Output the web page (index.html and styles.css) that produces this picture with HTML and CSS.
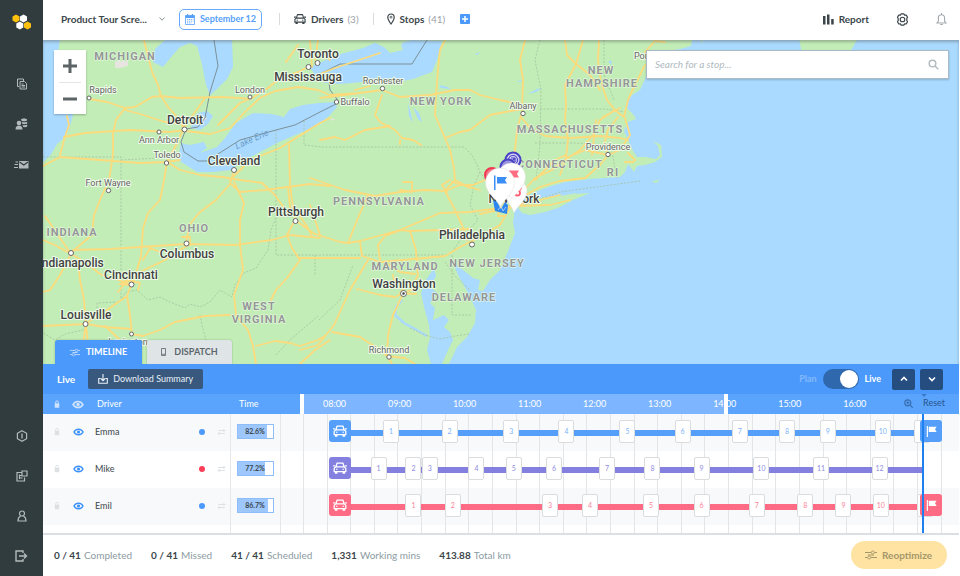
FILE: index.html
```html
<!DOCTYPE html>
<html lang="en">
<head>
<meta charset="utf-8">
<title>Route planner</title>
<link rel="stylesheet" href="styles.css">
</head>
<body>
<svg class="sprite" aria-hidden="true">
  <symbol id="i-car" viewBox="0 0 16 14"><path fill="none" stroke="currentColor" stroke-width="1.500" stroke-linejoin="round" d="M3.200 5.800 4.600 1.200h6.800l1.400 4.600M2.800 5.800h10.400l1.600 1.700v3.700H1.200V7.500z"/><path fill="currentColor" d="M2 11h3v2.800H2zM11 11h3v2.800h-3zM0 3.800h2.500v1.400H0zM13.500 3.800H16v1.400h-2.500z"/><circle cx="4.300" cy="8.500" r=".9" fill="currentColor"/><circle cx="11.700" cy="8.500" r=".9" fill="currentColor"/></symbol>
  <symbol id="i-flag" viewBox="0 0 14 14"><path fill="currentColor" d="M1 0h1.500v14H1zM3.500 1h10l-2 3.200 2 3.300h-10z"/></symbol>
  <symbol id="i-eye" viewBox="0 0 14 10"><path fill="none" stroke="currentColor" stroke-width="1.800" d="M1.200 5C4 .2 10 .2 12.800 5 10 9.800 4 9.800 1.200 5z"/><circle cx="7" cy="5" r="2" fill="currentColor"/></symbol>
  <symbol id="i-lock" viewBox="0 0 8 10"><path fill="currentColor" d="M1 4h6v6H1z"/><path fill="none" stroke="currentColor" stroke-width="1.200" d="M2.200 4.500V2.600a1.800 1.800 0 0 1 3.600 0v1.900"/></symbol>
  <symbol id="i-swap" viewBox="0 0 12 10"><path fill="none" stroke="currentColor" stroke-width="1.300" d="M1.500 3h9M8.500 1l2 2-2 2M10.500 7h-9M3.500 5l-2 2 2 2"/></symbol>
  <symbol id="i-tune" viewBox="0 0 12 10"><path fill="none" stroke="currentColor" d="M0 2.500h6M9.500 2.500H12M0 7.500h2.500M6 7.500h6M3 5h6"/><circle cx="7.800" cy="2.500" r="1.500" fill="none" stroke="currentColor" stroke-width=".9"/><circle cx="4.200" cy="7.500" r="1.500" fill="none" stroke="currentColor" stroke-width=".9"/></symbol>
</svg>
<div class="app">
  <aside class="sidebar">
    <a class="logo" href="#" aria-label="Home">
      <svg width="22" height="18" viewBox="0 0 22 18"><path fill="#fec10d" d="M5 1.500 8.500 3.500v4L5 9.500 1.500 7.500v-4z"/><path fill="#fff" d="M12.500 1.500 16 3.500v4l-3.500 2L9 7.500v-4z"/><path fill="#fff" d="M8.800 8.500l3.500 2v4l-3.500 2-3.500-2v-4z"/><path fill="#fec10d" d="M16.500 8.500l3.500 2v4l-3.500 2-3.500-2v-4z"/></svg>
    </a>
    <nav class="side-nav">
      <a href="#" aria-label="Plans"><svg width="12" height="12" viewBox="0 0 12 12"><path fill="none" stroke="currentColor" d="M3 8.500H1.500V1h6v2M4 3.500h4.500l2 2V11H4z"/><path fill="none" stroke="currentColor" d="M5.500 6h2M5.500 7.500h3.500M5.500 9h3.500"/></svg></a>
      <a href="#" aria-label="Drivers"><svg width="13" height="12" viewBox="0 0 13 12"><circle cx="4" cy="5" r="2.300" fill="currentColor"/><path fill="currentColor" d="M.5 11.500c0-3 1.500-4 3.500-4s3.500 1 3.500 4zM6 1.500C7 .3 11 .3 12 1.500v1c-1 1-4 1-5.500.2zM7 4c1.500.600 4 .400 5.200-.300v1.800c-1 .700-3.500.900-5 .300zM7.500 7c1.500.400 3.500.200 4.700-.400v2c-1 .600-2.500.700-4 .400z"/></svg></a>
      <a href="#" aria-label="Messages"><svg width="15" height="9" viewBox="0 0 15 9"><path fill="currentColor" d="M5 1h9.500v7.500H5z"/><path fill="none" stroke="#303c3e" stroke-width="1.200" d="M5.500 2l4.300 3 4.200-3"/><path stroke="currentColor" d="M1.500 2h2.500M.5 4.500H4M0 7.500h4"/></svg></a>
    </nav>
    <nav class="side-nav side-nav-end">
      <a href="#" aria-label="Info"><svg width="12" height="12" viewBox="0 0 12 12"><path fill="none" stroke="currentColor" stroke-width="1.200" d="M6 .7l4.600 2.600v5.400L6 11.300 1.400 8.700V3.300z"/><path stroke="currentColor" stroke-width="1.300" d="M6 3.500v5"/></svg></a>
      <a href="#" aria-label="Integrations"><svg width="12" height="12" viewBox="0 0 12 12"><path fill="none" stroke="currentColor" stroke-width="1.200" d="M5.500 2.500H1v8.500h7.500V7.500M6 1h5v5H6zM3.500 4.500v4.500M3.500 5.500h2M3.500 8h3"/></svg></a>
      <a href="#" aria-label="Account"><svg width="10" height="12" viewBox="0 0 10 12"><circle cx="5" cy="3.500" r="2.500" fill="none" stroke="currentColor" stroke-width="1.200"/><path fill="none" stroke="currentColor" stroke-width="1.200" d="M3.500 6C1.500 7 1 9 1 11h8c0-2-.500-4-2.500-5"/></svg></a>
      <a href="#" aria-label="Log out"><svg width="13" height="12" viewBox="0 0 13 12"><path fill="none" stroke="currentColor" stroke-width="1.400" d="M8 3V1H1v10h7V9M4 6h7.500M9 3.500 11.500 6 9 8.500"/></svg></a>
    </nav>
  </aside>

  <main class="main">
    <header class="topbar">
      <button class="plan-name" type="button">Product Tour Scre...<svg width="6" height="4" viewBox="0 0 6 4"><path fill="none" stroke="#8a9296" d="M.5.500 3 3.200 5.500.500"/></svg></button>
      <button class="date" type="button"><svg width="10" height="11" viewBox="0 0 10 11"><path fill="none" stroke="currentColor" stroke-width=".8" d="M.5 1.500h9v9h-9z"/><path fill="currentColor" d="M.5 1.500h9v2.500h-9zM2 0h1.200v2H2zM6.800 0H8v2H6.800z"/><path stroke="currentColor" stroke-width=".8" stroke-dasharray="1.300 .7" d="M2 5.500h6.500M2 7.200h6.500M2 8.900h4.500"/></svg>September 12</button>
      <div class="counter counter-drivers"><svg width="12" height="12"><use href="#i-car"/></svg><b>Drivers</b><span>(3)</span></div>
      <div class="counter counter-stops"><svg width="8" height="12" viewBox="0 0 8 12"><path fill="none" stroke="currentColor" stroke-width="1.200" d="M4 11C2 8.200.8 6.200.8 4.200a3.200 3.200 0 0 1 6.400 0C7.200 6.200 6 8.200 4 11z"/><circle cx="4" cy="4.200" r="1" fill="none" stroke="currentColor" stroke-width=".8"/></svg><b>Stops</b><span>(41)</span></div>
      <button class="add" type="button" aria-label="Add stops"><svg width="10" height="10" viewBox="0 0 10 10"><rect width="10" height="10" rx="1" fill="#4a99fb"/><path stroke="#fff" stroke-width="1.500" d="M5 2v6M2 5h6"/></svg></button>
      <button class="report" type="button"><svg width="11" height="11" viewBox="0 0 11 11"><path fill="currentColor" d="M0 2h2.500v8.500H0zM4 .5h2.500v10H4zM8.200 5h2.500v5.500H8.200z"/></svg>Report</button>
      <button class="icon-btn" type="button" aria-label="Settings"><svg width="13" height="13" viewBox="0 0 13 13"><path fill="none" stroke="#394348" stroke-width="1.200" stroke-linejoin="round" d="M5.200.8h2.600l.8 1.300 1.600-.1 1.300 2.200-.7 1.400v1.800l.7 1.400-1.300 2.200-1.600-.1-.8 1.300H5.200l-.8-1.300-1.600.1-1.300-2.200.7-1.400V5.600l-.7-1.400L2.800 2l1.600.1z"/><circle cx="6.500" cy="6.500" r="2.300" fill="none" stroke="#394348" stroke-width="1.100"/></svg></button>
      <button class="icon-btn" type="button" aria-label="Notifications"><svg width="11" height="13" viewBox="0 0 11 13"><path fill="none" stroke="#a3a9ac" stroke-width="1.100" d="M1 10h9L8.600 8V5c0-2-1.200-3.200-3.100-3.200S2.400 3 2.400 5v3zM5.500 0v2M4.200 11.500h2.600"/></svg></button>
    </header>

    <section class="map" aria-label="Map">
      <svg class="map-canvas" viewBox="43 40 916 324" preserveAspectRatio="xMidYMid slice">
        <rect x="0" y="0" width="1100" height="500" fill="#c2edb6"/>
        <g class="water">
          <path d="M43 40H60L58 52 62 80 73 115 69 130 66 136 57 144 50 156 43 162z"/>
          <path d="M165 40 155 49 153 62 163 67 172 56 180 47 190 43 197 46 202 64 206 85 210 95 217 89 227 79 233 67 232 40z"/>
          <path d="M198 113 207 111 213 116 208 124 200 130 191 128 193 120z"/>
          <path d="M181 143 190 145 204 142 207 148 200 153 217 147 225 138 236 123 253 113 272 114 284 117 290 109 303 105 319 103 335 102 337 107 329 116 318 125 300 133 277 143 260 152 245 160 231 170 213 172 197 172 186 165 178 160z"/>
          <path d="M310 67 337 55 363 48 375 43 384 47 390 53 403 50 400 43 412 40 442 41 437 60 432 72 413 79 387 84 363 82 340 84 325 83 317 78z"/>
          <path d="M693 36 691 46 680 49 660 52 650 62 645 79 640 90 632 95 628 100 627 108 633 114 636 119 628 122 624 131 628 140 632 149 637 157 645 157 656 159 660 155 658 146 653 141 661 145 662 157 655 162 645 165 637 166 634 172 628 164 625 172 620 177 605 178 590 179 565 182 548 187 535 192 522 199 514 207 514 216 513 222 515 233 508 251 500 270 490 280 483 291 478 290 480 280 473 278 463 270 453 263 458 275 467 291 476 310 475 323 467 337 457 347 449 364V380H970V30z"/>
          <path d="M434 268 426 280 421 293 424 307 429 325 430 338 427 350 431 364H442L448 350 453 340 450 332 444 327 449 320 444 315 433 320 435 308 430 303 437 293 430 287 436 276z"/>
          <path d="M528 94l9-5 5-1-6 4zM517 82l6-3-3 3zM439 85l9 2 2 2-9-1zM475 54l6-2-4 3zM408 103l1 13 4 7-3-13zM413 107l5 12 4 3-3-9zM608 62l3-2 1 5z"/>
          <path fill="none" stroke="#aadaff" stroke-width="2.500" d="M402 300 396 307 395 315 404 323 415 329 427 336"/>
        </g>
        <g fill="#c2edb6">
          <path d="M518 208 522 213 530 215 545 212 558 208 573 200 590 193 575 194 568 198 577 193 560 196 545 197 530 200z"/>
          <path d="M799 36 801 50 850 52 858 38z"/>
          <path d="M652 181l8-1-4 3zM640 176l4 1zM700 41l3 0v2z"/>
          <path d="M396 44l8-2-4 4z"/>
        </g>
        <path fill="#e6e5e0" d="M115 61h13v5l-8 2h-5zM203 116l4 2-3 3-3-2zM331 118l4 1-4 2z"/>
        <g class="borders">
          <path d="M43 157H121V300M121 160 160 158M276 130V255H449M304 121V145L322 147H464L472 155 477 165 480 172 488 184M315 255V275M452 255V315H472M540 40 535 60 541 90 540 145 536 180M540 109H605L625 112M535 143H575L608 145M604 40V75L614 100"/>
          <path d="M277 215 271 230 268 250 256 268 244 273 235 285 232 297 220 290 210 302 200 307 190 304 185 308 170 302 160 297 148 300 137 290 126 292 119 302 97 303 97 312 83 330 65 334 55 340 43 333M200 315 202 325 206 340 192 347 172 360M480 172 474 185 470 205 478 220 463 236 452 252M319 320 340 300 353 265M445 262 456 277 470 290M410 328 425 335 440 339 455 336 470 334M612 152 617 178M503 180 510 195M640 181 560 192 520 206M276 355 290 340 318 316"/>
        </g>
        <g class="frontier"><path d="M214 40 218 66 210 92 205 118 198 127 186 129 181 142 184 152 198 161 207 161 240 140 276 130 295 125 320 112 336 104 337 99 330 90 329 83M320 74 340 64 412 64 427 40"/></g>
        <g class="roads">
          <path d="M144 40 152 72 158 85 161 96 168 107 178 118 184 129M161 96 152 97 135 107 125 108 107 102 90 99M125 108 116 120 113 133 113 155 109 180 100 200 94 215 92 235M161 96 180 98 220 97 240 98 250 99M125 110 140 114 165 122 182 124 186 125M43 166 60 157 100 160 140 163 166 162 180 160M60 155 64 140 69 125 67 116M64 137 85 133 130 130 170 132 185 130"/>
          <path d="M186 131 210 134 230 128 247 110 260 98 275 91 298 87 318 90 330 95M218 125 240 103 252 98M252 98 268 88 280 78 298 72 310 66M184 128 176 145 167 162M167 162 164 180 160 200 148 213 143 228 141 256 137 270 132 283M184 127 195 112 205 98"/>
          <path d="M167 162 180 170 200 175 222 177 240 180 262 183 275 195 282 205 288 214M233 173 230 184 216 200 200 212 190 224 186 242M234 182 244 203 240 220 240 245 243 270 234 295 236 315 248 330 253 346 256 364M230 180 250 160 280 148 320 123 330 118M289 145 290 185 294 215M230 183 240 192 265 190 310 184 330 186"/>
          <path d="M43 240 55 245 71 254 73 250 110 249 186 244 235 245 272 240 290 235 320 238M71 254 60 275 50 290 43 292M71 254 85 262 100 274 128 283M78 260 80 280 84 300 86 324M71 254 45 216M188 245 165 260 140 272 131 285M131 285 120 284M131 285 127 296 107 310 88 322M127 296 130 315 132 334 143 336 160 330 175 322 205 316 230 315M86 324 105 327 131 329M43 326 86 324 88 345M86 324 82 350 84 364M256 346 275 341 290 343 300 346 318 340 325 336M300 364 315 350 330 340M92 235 80 245 72 252M105 326 120 340 135 347"/>
          <path d="M294 222 287 235 292 248 300 260 287 278 276 290 271 300M298 258 360 258M296 221 290 207 288 188M295 220 315 234 340 242 348 243 360 241 400 230 440 213 470 212 500 208 516 207M299 215 306 225 312 236M320 235 310 205M348 243 358 218 368 195M360 242 362 256 380 262 402 260 425 258 445 256 460 247 480 237 500 225 510 208M400 230 410 231 470 229M410 231 416 250 417 268 418 275 411 290 404 293M380 260 378 245 385 236 402 230M368 260 350 290 334 325 318 345 300 350M357 289 380 295 395 297 403 293M393 275 395 285M403 294 393 315 388 335 387 355 392 364M332 332 360 337 380 350 387 356 405 358 415 364M385 262 400 272 415 274"/>
          <path d="M310 178 345 190 375 196 400 192 425 190 445 191 460 185 473 185 485 180M400 190 412 192 412 182 403 182M445 191 455 210 462 225 467 240M454 168 455 180 450 185 445 191M454 168 450 150 445 138 435 115 436 95 438 70 440 50 445 40M320 140 335 137 345 140 365 130 390 126M382 95 375 115 380 122 395 130 402 138 413 140 421 145M400 140 400 144M330 95 360 93 382 90 400 97 430 95 455 90 470 90 480 95 500 100 519 104M445 138 460 132 470 130 490 115 505 112 522 109M522 110 523 80 520 60 525 40M522 112 517 130 515 150 512 165M522 118 530 128 545 136 570 138 600 136 620 138 628 140M320 98 360 93M450 180 442 185 447 192M454 168 455 180 470 188"/>
          <path d="M565 40 567 55 576 64 565 85 566 105 565 120 568 140 566 158 560 175M583 40 576 64M599 40 598 60 601 82 607 100 615 110 624 117M624 117 628 100 635 85 645 65M615 110 600 120 593 135 580 150 565 160 552 170 535 178 524 190M576 64 590 75 600 90M566 158 585 150 608 155 620 150 630 135 625 118M608 155 600 165 585 178 560 181 540 187 524 196M596 120 592 155M618 117 608 130 604 145 608 155M628 153 635 160 633 162 625 162M506 207 540 200 560 195M480 214 498 210 510 190 520 180M516 206 550 205 570 200M506 207 495 185M452 182 480 190M535 180 555 160 566 155M603 117 620 108M320 74 335 68 380 53M310 40 312 67M318 40 315 60M286 62 298 45M645 52 655 41 665 42M320 52 330 60M355 90 370 86"/>
          <path d="M500 208 498 216 504 216M120 284 127 280 140 283 138 290M160 252 150 248 143 260M118 292 128 280M182 237 190 237 190 245M400 288 408 286M410 280 400 293 416 294"/>
        </g>
        <g class="towns">
          <circle cx="89" cy="98" r="2"/><circle cx="250" cy="97" r="2"/><circle cx="159" cy="132" r="2"/><circle cx="184.500" cy="129.500" r="2.500"/><circle cx="166.500" cy="163" r="2.200"/><circle cx="234" cy="170" r="2.500"/><circle cx="108.500" cy="190.500" r="2.200"/><circle cx="308.500" cy="67" r="2.500"/><circle cx="317.500" cy="63" r="2.500"/><circle cx="382.500" cy="88.500" r="2.200"/><circle cx="336.500" cy="102" r="2.200"/><circle cx="523" cy="113.500" r="2.200"/><circle cx="608" cy="154.500" r="2.200"/><circle cx="71" cy="253" r="2.500"/><circle cx="186.500" cy="243.500" r="2.500"/><circle cx="131.500" cy="284.500" r="2.500"/><circle cx="85.500" cy="324" r="2.500"/><circle cx="131.500" cy="334" r="2"/><circle cx="144.500" cy="343" r="2.200"/><circle cx="295.500" cy="221" r="2.500"/><circle cx="472" cy="244.500" r="2.500"/><circle cx="389" cy="357" r="2.200"/><circle cx="403.500" cy="293.500" r="3"/><circle cx="403.500" cy="293.500" r="1" class="capital"/>
        </g>
        <g class="states">
          <text x="125" y="60">MICHIGAN</text><text x="441" y="105">NEW YORK</text><text x="601" y="74">NEW</text><text x="602" y="87">HAMPSHIRE</text><text x="570" y="133">MASSACHUSETTS</text><text x="560" y="168">CONNECTICUT</text><text x="613" y="176">RI</text><text x="379" y="205">PENNSYLVANIA</text><text x="194" y="232">OHIO</text><text x="72" y="236">INDIANA</text><text x="405" y="270">MARYLAND</text><text x="487" y="267">NEW JERSEY</text><text x="464" y="301">DELAWARE</text><text x="259" y="310">WEST</text><text x="259" y="323">VIRGINIA</text>
        </g>
        <g class="cities">
          <text x="318" y="58">Toronto</text><text x="308" y="81">Mississauga</text><text x="185" y="124">Detroit</text><text x="234" y="165">Cleveland</text><text x="296" y="216">Pittsburgh</text><text x="187" y="258">Columbus</text><text x="71" y="267">Indianapolis</text><text x="131" y="279">Cincinnati</text><text x="86" y="319">Louisville</text><text x="472" y="239">Philadelphia</text><text x="404" y="288">Washington</text><text x="514" y="203">New York</text>
        </g>
        <g class="small-towns">
          <text x="103" y="93">Rapids</text><text x="250" y="93">London</text><text x="159" y="143">Ann Arbor</text><text x="167" y="158">Toledo</text><text x="108" y="186">Fort Wayne</text><text x="383" y="84">Rochester</text><text x="355" y="105">Buffalo</text><text x="523" y="109">Albany</text><text x="608" y="150">Providence</text><text x="389" y="353">Richmond</text><text x="651" y="59">Portland</text><text x="128" y="345">Lexington</text>
          <text class="lake" x="253" y="142" transform="rotate(-24 253 142)">Lake Erie</text>
        </g>
        <g class="pins">
          <circle cx="513" cy="160" r="7.500" fill="#d5d2f6" stroke="#4a42c4" stroke-width="2"/><circle cx="513" cy="160" r="4.500" fill="none" stroke="#4a42c4" stroke-width="1.200"/><path stroke="#4a42c4" stroke-width="1.200" fill="none" d="M510 163l5-5M511 158h4v4"/>
          <circle cx="508" cy="167" r="7.500" fill="#9a94e0" stroke="#4a42c4" stroke-width="2"/>
          <circle cx="492" cy="175" r="7" fill="#f4798c" stroke="#ef3850" stroke-width="2"/>
          <path fill="#fff" d="M514 213C511 204 505 200 505 191a11 11 0 0 1 22 0c0 9-9 14-13 22z" stroke="#ddd" stroke-width=".5"/><path fill="none" stroke="#ff5c73" stroke-width="1.800" d="M517.500 190.500a2.500 2.500 0 1 0 2.500 2.500c0-1.500-1-2.500-2.500-2.500zM519.500 190.500l2-3"/>
          <path fill="#fff" stroke="#ddd" stroke-width=".5" d="M512 199C507 192 497.500 188 497.500 177a14 14 0 0 1 28 0c0 10-9 15-13.500 22z"/><path fill="#ff6b80" d="M509 170.500h10l-2 3.500 2 3.500h-10z"/>
          <path fill="#2f86ee" d="M493 200l4 2 4 7 4-7 3 3-1 9-12-3z"/><path fill="none" stroke="#d6e8ff" stroke-width=".7" d="M498 210l3-4 2 5 3-4"/>
          <path fill="#fff" stroke="#ddd" stroke-width=".5" d="M500.500 207C498 199 485.500 194 485.500 182.500a14.500 14.500 0 0 1 29 0c0 11.500-11 16.500-14 24.500z"/><path fill="#3b8ef5" d="M494 175.500h1.500V190H494zM497 177h10l-2 3.300 2 3.200h-10z"/>
        </g>
      </svg>
      <div class="zoom">
        <button type="button" aria-label="Zoom in"><svg width="14" height="14" viewBox="0 0 14 14"><path stroke="#5d6466" stroke-width="3" d="M7 0v14M0 7h14"/></svg></button>
        <button type="button" aria-label="Zoom out"><svg width="14" height="14" viewBox="0 0 14 14"><path stroke="#5d6466" stroke-width="3" d="M0 7h14"/></svg></button>
      </div>
      <label class="search">
        <input type="text" placeholder="Search for a stop..." aria-label="Search for a stop">
        <svg width="11" height="11" viewBox="0 0 11 11"><circle cx="4.500" cy="4.500" r="3.300" fill="none" stroke="currentColor" stroke-width="1.500"/><path stroke="currentColor" stroke-width="1.600" d="M7 7l3.200 3.200"/></svg>
      </label>
      <div class="tabs">
        <button class="tab tab-active" type="button"><svg width="10" height="9"><use href="#i-tune"/></svg>TIMELINE</button>
        <button class="tab" type="button"><svg width="5" height="8" viewBox="0 0 5 8"><path fill="none" stroke="currentColor" stroke-width=".8" d="M.5.500h4v7h-4zM1 6.300h3"/></svg>DISPATCH</button>
      </div>
    </section>

    <section class="panel">
      <div class="panel-bar">
        <b>Live</b>
        <button class="download" type="button"><svg width="10" height="10" viewBox="0 0 10 10"><path fill="none" stroke="currentColor" stroke-width="1.100" d="M2.500 4.500H.7v4.800h8.600V4.500H7.500M5 0v6.500M2.800 4.500 5 6.700l2.200-2.200"/></svg>Download Summary</button>
        <label class="mode"><span class="mode-off">Plan</span><input type="checkbox" role="switch" checked><span>Live</span></label>
        <button class="step" type="button" aria-label="Previous"><svg width="8" height="6" viewBox="0 0 8 6"><path fill="none" stroke="#fff" stroke-width="1.600" d="M1 4.500 4 1.500l3 3"/></svg></button>
        <button class="step" type="button" aria-label="Next"><svg width="8" height="6" viewBox="0 0 8 6"><path fill="none" stroke="#fff" stroke-width="1.600" d="M1 1.500l3 3 3-3"/></svg></button>
      </div>
      <table class="schedule">
        <colgroup><col class="c-lock"><col class="c-eye"><col class="c-name"><col class="c-dot"><col class="c-swap"><col class="c-time"><col></colgroup>
        <thead>
          <tr>
            <th><svg width="6" height="8"><use href="#i-lock"/></svg></th>
            <th><svg width="12" height="9"><use href="#i-eye"/></svg></th>
            <th class="name">Driver</th><th></th><th></th><th class="time">Time</th>
            <th class="track-cell"><div class="hours"><span>08:00</span><span>09:00</span><span>10:00</span><span>11:00</span><span>12:00</span><span>13:00</span><span>14:00</span><span>15:00</span><span>16:00</span><i class="handle"></i><i class="handle handle-end"></i><i class="now-mark"></i><button class="reset" type="button"><svg width="9" height="9" viewBox="0 0 9 9"><circle cx="3.800" cy="3.800" r="3" fill="none" stroke="currentColor" stroke-width="1.200"/><path stroke="currentColor" stroke-width="1.100" d="M6 6l2.700 2.700M2.300 3.800h3M3.800 2.300v3"/></svg>Reset</button></div></th>
          </tr>
        </thead>
        <tbody>
          <tr class="blue">
            <td><svg class="faint" width="6" height="9"><use href="#i-lock"/></svg></td>
            <td><svg class="eye" width="11" height="8"><use href="#i-eye"/></svg></td>
            <td class="name">Emma</td><td><i class="dot"></i></td><td><svg class="faint" width="9" height="8"><use href="#i-swap"/></svg></td>
            <td class="time"><span class="load" style="--load:82.6%">82.6%</span></td>
            <td class="track-cell"><div class="track"><i class="route"></i><i class="end start"><svg width="14" height="12"><use href="#i-car"/></svg></i><span style="left:13.5%">1</span><span style="left:22.4%">2</span><span style="left:31.8%">3</span><span style="left:40.2%">4</span><span style="left:49.5%">5</span><span style="left:57.9%">6</span><span style="left:66.6%">7</span><span style="left:73.8%">8</span><span style="left:80%">9</span><span style="left:88.4%">10</span><span style="left:94.4%"></span><i class="end finish"><svg width="11" height="11"><use href="#i-flag"/></svg></i><i class="now"></i></div></td>
          </tr>
          <tr class="violet">
            <td><svg class="faint" width="6" height="9"><use href="#i-lock"/></svg></td>
            <td><svg class="eye" width="11" height="8"><use href="#i-eye"/></svg></td>
            <td class="name">Mike</td><td><i class="dot dot-red"></i></td><td><svg class="faint" width="9" height="8"><use href="#i-swap"/></svg></td>
            <td class="time"><span class="load" style="--load:77.2%">77.2%</span></td>
            <td class="track-cell"><div class="track"><i class="route"></i><i class="end start"><svg width="14" height="12"><use href="#i-car"/></svg></i><span style="left:11.6%">1</span><span style="left:16.9%">2</span><span style="left:19.4%">3</span><span style="left:26.5%">4</span><span style="left:32.2%">5</span><span style="left:38.3%">6</span><span style="left:46.4%">7</span><span style="left:53.3%">8</span><span style="left:60.8%">9</span><span style="left:69.9%">10</span><span style="left:79%">11</span><span style="left:87.9%">12</span><i class="now"></i></div></td>
          </tr>
          <tr class="red">
            <td><svg class="faint" width="6" height="9"><use href="#i-lock"/></svg></td>
            <td><svg class="eye" width="11" height="8"><use href="#i-eye"/></svg></td>
            <td class="name">Emil</td><td><i class="dot"></i></td><td><svg class="faint" width="9" height="8"><use href="#i-swap"/></svg></td>
            <td class="time"><span class="load" style="--load:86.7%">86.7%</span></td>
            <td class="track-cell"><div class="track"><i class="route"></i><i class="end start"><svg width="14" height="12"><use href="#i-car"/></svg></i><span style="left:16.9%">1</span><span style="left:22.9%">2</span><span style="left:37.7%">3</span><span style="left:43.8%">4</span><span style="left:53.1%">5</span><span style="left:60.8%">6</span><span style="left:69.2%">7</span><span style="left:76.6%">8</span><span style="left:82.4%">9</span><span style="left:88.1%">10</span><span style="left:94.8%"></span><i class="end finish"><svg width="11" height="11"><use href="#i-flag"/></svg></i><i class="now"></i></div></td>
          </tr>
          <tr class="spacer"><td></td><td></td><td></td><td></td><td></td><td class="time"></td><td class="track-cell"><div class="track"><i class="now"></i></div></td></tr>
        </tbody>
      </table>
    </section>

    <footer class="summary">
      <div><b>0 / 41</b>Completed</div>
      <div><b>0 / 41</b>Missed</div>
      <div><b>41 / 41</b>Scheduled</div>
      <div><b>1,331</b>Working mins</div>
      <div><b>413.88</b>Total km</div>
      <button class="reoptimize" type="button"><svg width="12" height="10"><use href="#i-tune"/></svg>Reoptimize</button>
    </footer>
  </main>
</div>
</body>
</html>
```
FILE: styles.css
```css
* { box-sizing: border-box; }
body { margin: 0; font-family: Lato, "Liberation Sans", sans-serif; font-size: 10px; line-height: 12px; color: #3b464b; background: #fff; }
button { font: inherit; color: inherit; background: none; border: 0; padding: 0; display: flex; align-items: center; justify-content: center; cursor: pointer; }
svg { display: block; flex: none; }
i { font-style: normal; }
.sprite { position: absolute; width: 0; height: 0; }

.app { display: flex; min-height: 100vh; padding-right: 1px; }
.sidebar { flex: none; width: 43px; background: #303c3e; display: flex; flex-direction: column; color: #b4babb; }
.logo { height: 44px; margin-bottom: 20px; display: flex; align-items: center; justify-content: center; }
.side-nav a { height: 40px; display: flex; align-items: center; justify-content: center; color: inherit; }
.side-nav-end { margin-top: auto; }
.main { flex: 1; min-width: 0; display: flex; flex-direction: column; }

.topbar { height: 40px; flex: none; display: flex; align-items: center; padding: 0 12px 2px 18px; }
.plan-name { font-weight: 700; gap: 12px; }
.date { margin-left: 14px; height: 21px; padding: 0 5px; gap: 5px; border: 1px solid #68aafc; border-radius: 5px; color: #559ffb; font-size: 9px; font-weight: 700; }
.counter { display: flex; align-items: center; gap: 5px; border-left: 1px solid #d9dcde; height: 12px; }
.counter span { color: #9ba2a6; }
.counter b + span { margin-left: -1px; }
.counter-drivers { margin-left: 17px; padding-left: 14px; }
.counter-stops { margin-left: 14px; padding-left: 13px; }
.add { margin-left: 15px; }
.report { margin-left: auto; gap: 5px; font-weight: 700; }
.icon-btn { margin-left: 27px; }

.map { position: relative; z-index: 0; flex: 1; min-height: 200px; overflow: hidden; background: #aadaff; }
.map::after { content: ""; position: absolute; inset: 0; pointer-events: none; box-shadow: inset 0 2px 3px #5556; }
.map-canvas { position: absolute; inset: 0; width: 100%; height: 100%; }
.water { fill: #aadaff; }
.roads path { fill: none; stroke: #fcdb7d; stroke-width: 1.8; stroke-linejoin: round; stroke-linecap: round; }
.borders path { fill: none; stroke: #a5c2a0; stroke-width: .8; stroke-dasharray: 2 1.5; }
.frontier path { fill: none; stroke: #7c9098; stroke-width: 1; }
.towns circle { fill: #fff; stroke: #666; stroke-width: 1; }
.towns .capital { fill: #444; }
.map-canvas text { font-family: Roboto, sans-serif; text-anchor: middle; paint-order: stroke; stroke: #effbea; stroke-width: 2; stroke-linejoin: round; }
.states text { font-size: 11px; font-weight: 700; letter-spacing: 1px; fill: #939796; stroke-width: 1; }
.cities text { font-size: 12px; font-weight: 500; fill: #414141; }
.small-towns text { font-size: 9px; fill: #636363; }
.small-towns .lake { fill: #6a9ecb; stroke: none; font-style: italic; }

.zoom { position: absolute; left: 11px; top: 10px; width: 32px; padding: 0 5px; background: #fff; box-shadow: 0 1px 2px #0004; }
.zoom button { width: 100%; height: 32px; }
.zoom button + button { border-top: 1px solid #e4e4e4; }
.search { position: absolute; right: 10px; top: 10px; width: 303px; height: 29px; padding: 0 9px 1px 8px; display: flex; align-items: center; background: #fff; border: 1px solid #a9bac6; box-shadow: 0 1px 2px #0003; color: #b3bdc2; }
.search input { flex: 1; min-width: 0; border: 0; outline: 0; padding: 0; font: italic 10px/12px Lato, sans-serif; background: none; }
.search input::placeholder { color: #b0babf; opacity: 1; }
.tabs { position: absolute; left: 12px; bottom: 0; display: flex; gap: 5px; }
.tab { height: 24px; width: 85px; gap: 8px; border-radius: 3px 3px 0 0; background: #dfe4e6; color: #5b666b; font-size: 9px; font-weight: 700; box-shadow: 0 0 2px #0004; }
.tab-active { width: 87px; gap: 6px; background: #4a99fb; color: #fff; }
.tab-active svg { opacity: .7; }

.panel { flex: none; border-bottom: 2px solid #d9dfe3; }
.panel-bar { height: 30px; display: flex; align-items: center; padding: 0 16px 0 14px; background: #4a99fb; color: #fff; }
.download { margin-left: 13px; height: 20px; padding: 0 10px; gap: 5px; border-radius: 2px; background: #38587e; color: #e9f0f6; font-size: 9px; }
.mode { margin-left: auto; display: flex; align-items: center; gap: 6px; font-weight: 700; font-size: 9px; }
.mode-off { opacity: .3; }
.mode input { appearance: none; margin: 0; width: 36px; height: 20px; border-radius: 10px; background: #3068ae; display: flex; justify-content: flex-end; padding: 1px; }
.mode input::before { content: ""; width: 18px; height: 18px; border-radius: 50%; background: #fff; }
.step { margin-left: 5px; width: 23px; height: 21px; border-radius: 2px; background: #254d80; }
.mode + .step { margin-left: 11px; }

.schedule { width: 100%; table-layout: fixed; border-collapse: collapse; }
.c-lock { width: 28px; } .c-eye { width: 14px; } .c-name { width: 105px; } .c-dot { width: 24px; } .c-swap { width: 16px; } .c-time { width: 50px; }
.schedule th, .schedule td { padding: 0; vertical-align: middle; }
.schedule td { height: 37px; padding-bottom: 2px; }
.schedule td svg, .schedule th svg { margin: 0 auto; }
.schedule .name { text-align: left; padding-left: 10px; font-size: 9px; }
.schedule thead { background: #5ba4fe; color: #fff; }
.schedule th { height: 20px; font-weight: 400; font-size: 9px; }
.schedule th svg { opacity: .7; }
.schedule th.name { padding-left: 12px; }
.schedule th.time { text-align: left; padding-left: 9px; }
.schedule tbody tr:nth-child(odd) { background: #f8f9fb; }
.schedule .spacer td { height: 8px; padding: 0; background: #fff; }
.schedule td.time { border: solid #e5e8eb; border-width: 0 1px; padding-left: 6px; }
.faint { color: #dde1e3; }
.eye { color: #3d92fb; }
.dot { display: block; width: 6px; height: 6px; margin: 0 auto; border-radius: 50%; background: #4a99fb; }
.dot-red { background: #fb3f59; }
.load { display: block; width: 37px; height: 15px; border: 1px solid #8dbdfb; text-align: center; font-size: 7px; font-weight: 700; line-height: 13px; background: linear-gradient(to right, #9dc7fd var(--load), #fff var(--load)); }
.schedule td.track-cell, .schedule th.track-cell { padding: 0 0 0 22px; }
.hours { position: relative; height: 20px; display: flex; align-items: center; background: linear-gradient(to right, #7db5ff 64.5%, #5ba4fe 64.5%); }
.hours span { width: 9.9%; text-align: center; }
.handle { position: absolute; top: 0; left: -2px; width: 4px; height: 20px; background: #fff; }
.handle-end { left: 64.2%; }
.now-mark { position: absolute; left: 94.2%; top: 0; border: solid transparent; border-width: 3px 3px 0; border-top-color: #3a7cc9; }
.reset { position: absolute; right: 14px; top: 3px; gap: 10px; color: #27568c; }
.track { position: relative; z-index: 0; height: 37px; background: repeating-linear-gradient(to right, #e3e6e8 0 1px, transparent 1px 3.6%); }
.schedule td.track-cell { vertical-align: top; }
.spacer .track { height: 8px; }
.blue { --route: #559ffb; --ink: #7db3f8; } .violet { --route: #8480e0; --ink: #8f8be0; } .red { --route: #fd6b84; --ink: #fb8195; }
.route { position: absolute; left: 6%; right: 5.6%; top: 16px; height: 6px; background: var(--route); }
.track span { position: absolute; top: 6px; width: 16px; height: 23px; margin-left: -8px; background: #fff; border: 1px solid #dadcde; border-radius: 2px; color: var(--ink); font-size: 7px; line-height: 21px; text-align: center; }
.end { position: absolute; top: 6px; width: 22px; height: 22px; display: flex; align-items: center; border-radius: 3px; background: var(--route); color: #fff; }
.start { left: 4%; }
.finish { left: 94.1%; }
.now { position: absolute; left: 94.4%; top: 0; bottom: 0; width: 2px; background: #1e80ee; }

.summary { flex: none; height: 41px; display: flex; align-items: center; gap: 19px; padding: 0 12px 2px 11px; color: #8c9ba2; }
.summary b { margin-right: 3px; color: #3b464b; }
.reoptimize { margin-left: auto; height: 28px; padding: 0 15px 0 14px; gap: 5px; border-radius: 14px; background: #ffe3a2; color: #a5976a; font-weight: 700; }
```
